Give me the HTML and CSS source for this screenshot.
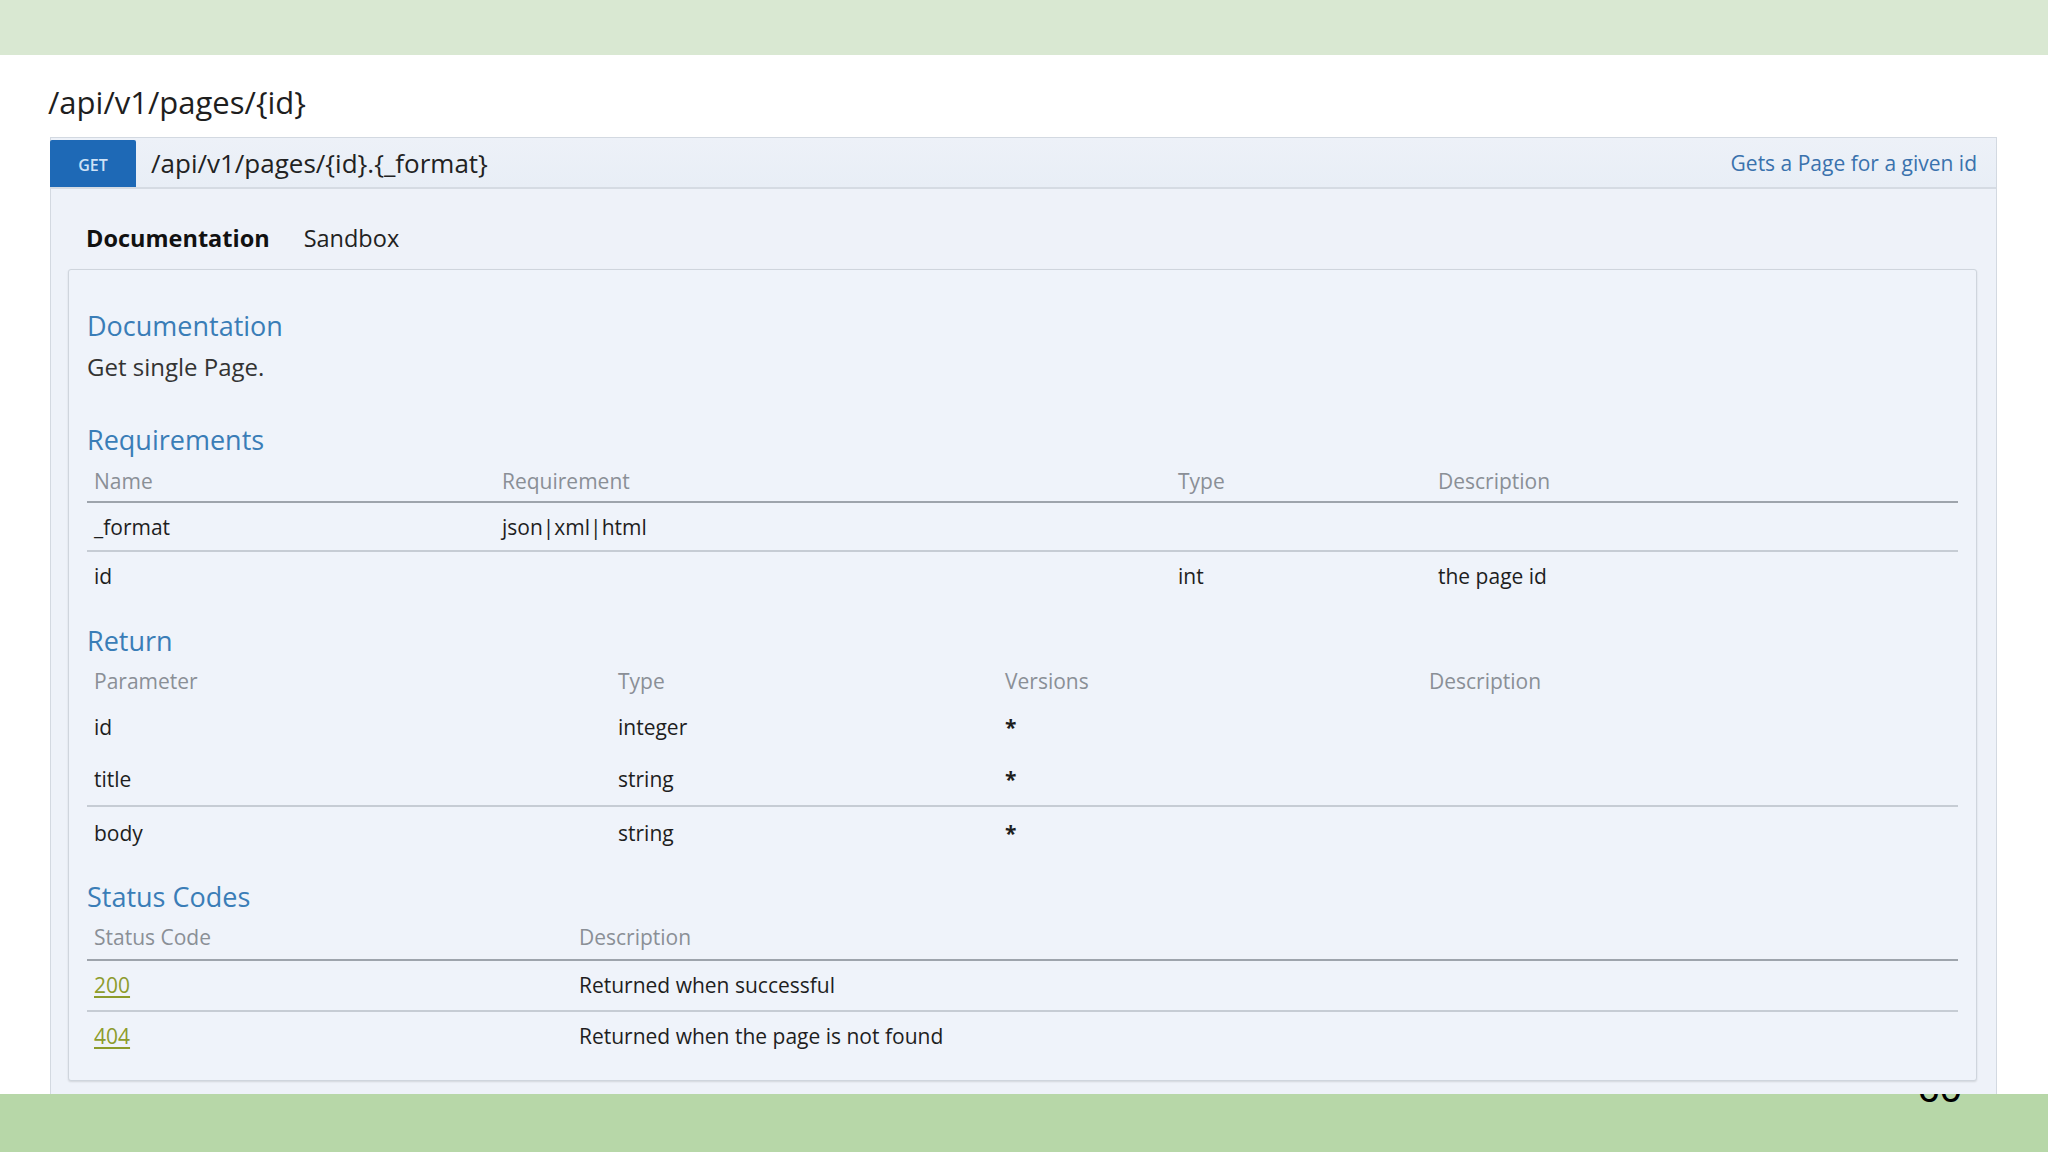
FILE: index.html
```html
<!DOCTYPE html>
<html>
<head>
<meta charset="utf-8">
<link rel="stylesheet" href="styles.css">
</head>
<body>
<div class="page">
  <div class="band-top"></div>
  <main class="main">
    <h1 class="resource">/api/v1/pages/{id}</h1>
    <section class="endpoint">
      <div class="ep-head">
        <span class="method">GET</span>
        <span class="path">/api/v1/pages/{id}.{_format}</span>
        <span class="summary">Gets a Page for a given id</span>
      </div>
      <div class="tabs">
        <span class="tab active">Documentation</span>
        <span class="tab">Sandbox</span>
      </div>
      <div class="panel">
        <h2 class="sec">Documentation</h2>
        <p class="desc">Get single Page.</p>

        <h2 class="sec sec-req">Requirements</h2>
        <table class="tbl req">
          <colgroup><col class="c408"><col class="c676"><col class="c260"><col></colgroup>
          <thead><tr><th>Name</th><th>Requirement</th><th>Type</th><th>Description</th></tr></thead>
          <tbody>
            <tr class="bordered"><td>_format</td><td>json|xml|html</td><td></td><td></td></tr>
            <tr><td>id</td><td></td><td>int</td><td>the page id</td></tr>
          </tbody>
        </table>

        <h2 class="sec sec-ret">Return</h2>
        <table class="tbl ret">
          <colgroup><col class="c524"><col class="c387"><col class="c424"><col></colgroup>
          <thead><tr><th>Parameter</th><th>Type</th><th>Versions</th><th>Description</th></tr></thead>
          <tbody>
            <tr><td>id</td><td>integer</td><td class="star">*</td><td></td></tr>
            <tr class="bordered"><td>title</td><td>string</td><td class="star">*</td><td></td></tr>
            <tr><td>body</td><td>string</td><td class="star">*</td><td></td></tr>
          </tbody>
        </table>

        <h2 class="sec sec-st">Status Codes</h2>
        <table class="tbl st">
          <colgroup><col class="c485"><col></colgroup>
          <thead><tr><th>Status Code</th><th>Description</th></tr></thead>
          <tbody>
            <tr class="bordered"><td><a class="code" href="#">200</a></td><td>Returned when successful</td></tr>
            <tr><td><a class="code" href="#">404</a></td><td>Returned when the page is not found</td></tr>
          </tbody>
        </table>
      </div>
    </section>
  </main>
  <footer class="band-bottom">
    <div class="pagenum">60</div>
  </footer>
</div>
</body>
</html>
```
FILE: styles.css
```css
* { box-sizing: border-box; }
html, body { margin: 0; padding: 0; }
body {
  font-family: "Open Sans", "DejaVu Sans", sans-serif;
  color: #222;
  background: #fff;
}
.page {
  width: 2048px;
  height: 1152px;
  display: flex;
  flex-direction: column;
  overflow: hidden;
}
.band-top {
  height: 55px;
  flex: 0 0 55px;
  background: #d9e8d2;
}
.main {
  flex: 1 1 auto;
  overflow: hidden;
  padding: 0 51px 0 50px;
}
.resource {
  margin: 29px 0 17px -2px;
  font-size: 31px;
  line-height: 36px;
  font-weight: 400;
  color: #1e1e1e;
  letter-spacing: 0;
}
.endpoint {
  border: 1px solid #d3d9e1;
  border-bottom: none;
  background: #eef2f9;
  padding-bottom: 40px;
}
.ep-head {
  display: flex;
  align-items: stretch;
  height: 51px;
  padding-top: 2px;
  border-bottom: 2px solid #d5dbe3;
  background: linear-gradient(#edf1f8, #e8eef6);
}
.method {
  width: 86px;
  margin-left: -1px;
  background: #1e69b6;
  color: #cfe2f6;
  font-size: 16px;
  font-weight: 600;
  border-radius: 2px 2px 0 0;
  display: flex;
  align-items: center;
  justify-content: center;
  padding-top: 3px;
}
.path {
  margin-left: 15px;
  font-size: 26px;
  line-height: 46px;
  color: #222;
}
.summary {
  margin-left: auto;
  margin-right: 19px;
  font-size: 21px;
  line-height: 46px;
  color: #3a72ad;
}
.tabs {
  display: flex;
  gap: 34px;
  padding: 34px 0 16px 35px;
  font-size: 23.5px;
  line-height: 30px;
}
.tab { color: #222; }
.tab.active { font-weight: 700; color: #111; }
.panel {
  margin: 0 19px 0 17px;
  border: 1px solid #cfd5dd;
  border-radius: 3px;
  background: #eff3fa;
  box-shadow: 0 1px 2px rgba(0, 0, 0, 0.12);
  padding: 39px 18px 19px 18px;
}
.sec {
  margin: 0;
  font-size: 27px;
  line-height: 34px;
  font-weight: 400;
  color: #3a7db7;
}
.desc {
  margin: 9px 0 0 0;
  font-size: 24px;
  line-height: 30px;
  color: #333;
}
.sec-req { margin-top: 41px; }
.sec-ret { margin-top: 25px; }
.sec-st { margin-top: 21px; }
.tbl {
  width: 100%;
  table-layout: fixed;
  border-collapse: collapse;
  font-size: 21px;
  line-height: 30px;
}
.c408 { width: 408px; }
.c676 { width: 676px; }
.c260 { width: 260px; }
.c524 { width: 524px; }
.c387 { width: 387px; }
.c424 { width: 424px; }
.c485 { width: 485px; }
.tbl th {
  text-align: left;
  font-weight: 400;
  color: #8a8f96;
  padding: 9px 7px 5px 7px;
}
.tbl td {
  padding: 9px 7px 8px 7px;
  color: #1e1e1e;
}
.req thead tr { border-bottom: 2px solid #9ea4ac; }
.req tr.bordered { border-bottom: 2px solid #c6ccd4; }
.ret th { padding: 8px 7px 5px 7px; }
.ret td { padding: 11px 7px 11px 7px; }
.ret tr.bordered { border-bottom: 2px solid #c6ccd4; }
.st th { padding: 8px 7px 7px 7px; }
.st thead tr { border-bottom: 2px solid #9ea4ac; }
.st td { padding: 9px 7px 10px 7px; }
.st tr.bordered { border-bottom: 2px solid #c6ccd4; }
.star { font-weight: 700; }
.code {
  color: #8d9c2c;
  text-decoration: underline;
  text-decoration-thickness: 2px;
  text-underline-offset: 3px;
}
.band-bottom {
  height: 58px;
  flex: 0 0 58px;
  background: #b7d7a8;
  display: flex;
  justify-content: flex-end;
  overflow: hidden;
}
.pagenum {
  margin-top: -26px;
  margin-right: 86px;
  font-family: "Liberation Sans", sans-serif;
  font-size: 40px;
  line-height: 40px;
  height: 40px;
  color: #000;
}
```
